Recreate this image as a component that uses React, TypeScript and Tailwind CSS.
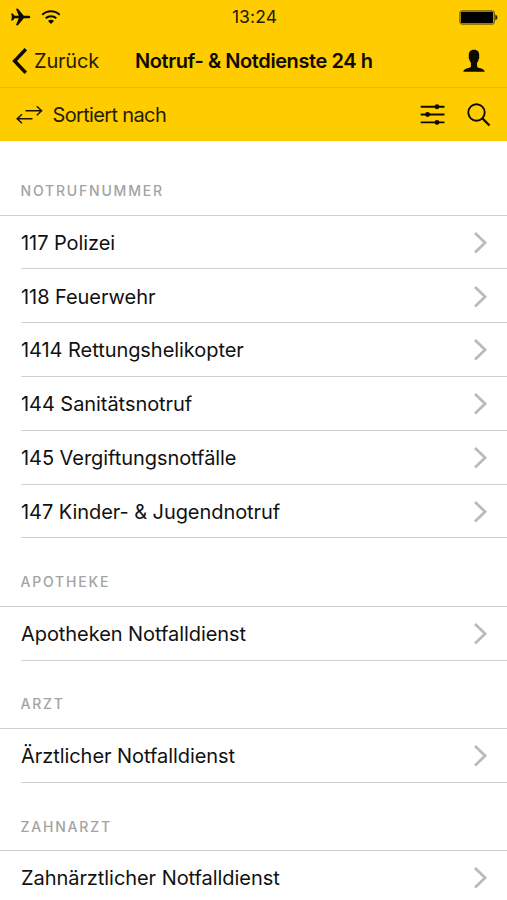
import { ReactNode } from 'react';

const sections = [
  {
    title: 'Notrufnummer',
    items: [
      '117 Polizei',
      '118 Feuerwehr',
      '1414 Rettungshelikopter',
      '144 Sanitätsnotruf',
      '145 Vergiftungsnotfälle',
      '147 Kinder- & Jugendnotruf',
    ],
  },
  { title: 'Apotheke', items: ['Apotheken Notfalldienst'] },
  { title: 'Arzt', items: ['Ärztlicher Notfalldienst'] },
  { title: 'Zahnarzt', items: ['Zahnärztlicher Notfalldienst'] },
];

function StatusBar() {
  return (
    <div className="grid h-[34px] grid-cols-3 items-center pl-[11px] pr-[9px]">
      <div className="flex items-center gap-[10px]">
        <svg width="20" height="18" viewBox="0 0 20 18" fill="#0d0b00">
          <path d="M19.3 9c0 .8-.8 1.300-1.800 1.300h-4.700L7 17.300H4.900l2.900-7H3.700L1.800 12.400H.2L.9 9 .2 5.600h1.600l1.900 2.100h4.100L4.900.7H7l5.800 7h4.700c1 0 1.800.5 1.800 1.300z" />
        </svg>
        <svg width="20" height="15" viewBox="0 0 20 15" fill="none" stroke="#0d0b00" strokeWidth="2">
          <path d="M1.300 4.800a12.400 12.400 0 0 1 17.400 0" />
          <path d="M4.700 8.300a7.600 7.600 0 0 1 10.600 0" />
          <path d="M10 14 7 11a4.200 4.200 0 0 1 6 0z" fill="#0d0b00" stroke="none" />
        </svg>
      </div>
      <span className="text-center text-[17.5px] tracking-[0.1px] text-[#241e00]">13:24</span>
      <svg className="justify-self-end" width="39" height="15" viewBox="0 0 39 15">
        <rect x="0.8" y="0.8" width="34.6" height="13.4" rx="2" fill="none" stroke="#6b5600" strokeWidth="1" />
        <rect x="1.8" y="1.8" width="32.4" height="11.4" rx="0.8" fill="#000" />
        <path d="M36.3 4.800c1.400.3 2.100 1.400 2.100 2.700s-.7 2.400-2.100 2.700z" fill="#2b2300" />
      </svg>
    </div>
  );
}

function NavBar() {
  return (
    <div className="flex h-[54px] items-center border-b border-[#e6b800] pl-[12px] pr-[21px]">
      <button className="flex w-[123px] items-center gap-[7px]">
        <svg width="15" height="26" viewBox="0 0 15 26" fill="none" stroke="#0d0b00" strokeWidth="3.4">
          <path d="M13.8 1.2 2.6 13l11.2 11.8" />
        </svg>
        <span className="text-[20px] tracking-[-0.2px] text-[#241e00]">Zurück</span>
      </button>
      <h1 className="flex-1 whitespace-nowrap text-[20px] font-semibold tracking-[-0.42px] text-[#0d0b00]">
        Notruf- &amp; Notdienste 24 h
      </h1>
      <svg width="24" height="24" viewBox="0 0 24 24" fill="#0d0b00">
        <path d="M12 .8C8.900.8 6.800 2.600 6.800 6c0 .6 0 1 .1 1.500-.4.4-.3 2 .4 2.500.3 1.700.9 2.800 1.600 3.600v3.600c0 1-.8 1.300-2.300 1.800-2.700.9-4.900 1.300-5.400 3.800h21.600c-.5-2.500-2.700-2.900-5.400-3.800-1.500-.5-2.300-.8-2.300-1.800v-3.600c.7-.8 1.300-1.900 1.600-3.600.7-.5.800-2.100.4-2.500.1-.5.1-.9.1-1.500C17.200 2.600 15.100.8 12 .8z" />
      </svg>
    </div>
  );
}

function SortBar() {
  return (
    <div className="flex h-[53px] items-center pl-[16px] pr-[16px]">
      <svg width="27" height="18" viewBox="0 0 27 18" fill="none" stroke="#1a1500" strokeWidth="1.5">
        <path d="M9.500 4.800h16M20.800.3l4.800 4.500-4.800 4.500M16.500 12.700H1.300M6 8.200l-4.800 4.500L6 17.200" />
      </svg>
      <span className="ml-[9.5px] flex-1 text-[20px] tracking-[-0.65px] text-[#241e00]">Sortiert nach</span>
      <svg width="25" height="22" viewBox="0 0 25 22" fill="#0d0b00" stroke="#0d0b00" strokeWidth="1.900">
        <path d="M.7 2.700h23.800M.7 10.500h23.800M.7 18.400h23.800" />
        <circle cx="17" cy="2.700" r="1.500" />
        <circle cx="7.600" cy="10.500" r="1.500" />
        <circle cx="17" cy="18.400" r="1.500" />
      </svg>
      <svg className="ml-[22px]" width="24" height="24" viewBox="0 0 24 24" fill="none" stroke="#0d0b00" strokeWidth="1.900">
        <circle cx="9.500" cy="9.500" r="8.200" />
        <path d="m15.300 15.300 7.200 7.200" strokeWidth="2.300" />
      </svg>
    </div>
  );
}

function Row({ children }: { children: ReactNode }) {
  return (
    <li className="ml-[21px] flex h-[53.8px] items-center justify-between border-b border-[#d0d0d0] pr-[19px] pt-[1.5px]">
      <span className="text-[20px] tracking-[-0.06px] text-[#111]">{children}</span>
      <svg width="15" height="24" viewBox="0 0 15 24" fill="none" stroke="#bbb" strokeWidth="2.800">
        <path d="m2 2 10.100 9.800L2 21.600" />
      </svg>
    </li>
  );
}

export default function App() {
  return (
    <div className="h-[900px] w-[507px] overflow-hidden bg-white font-['Inter',sans-serif] text-black">
      <header className="bg-[#ffcc00]">
        <StatusBar />
        <NavBar />
        <SortBar />
      </header>
      <main>
        {sections.map((section, i) => (
          <section key={section.title}>
            <h2
              className={`flex items-end border-b border-[#d0d0d0] pb-[13.5px] pl-[20.5px] text-[14px] font-medium uppercase tracking-[1.8px] text-[#a3a3a3] ${
                i === 0 ? 'h-[74.6px]' : 'h-[68.4px]'
              }`}
            >
              {section.title}
            </h2>
            <ul>
              {section.items.map((item) => (
                <Row key={item}>{item}</Row>
              ))}
            </ul>
          </section>
        ))}
      </main>
    </div>
  );
}
